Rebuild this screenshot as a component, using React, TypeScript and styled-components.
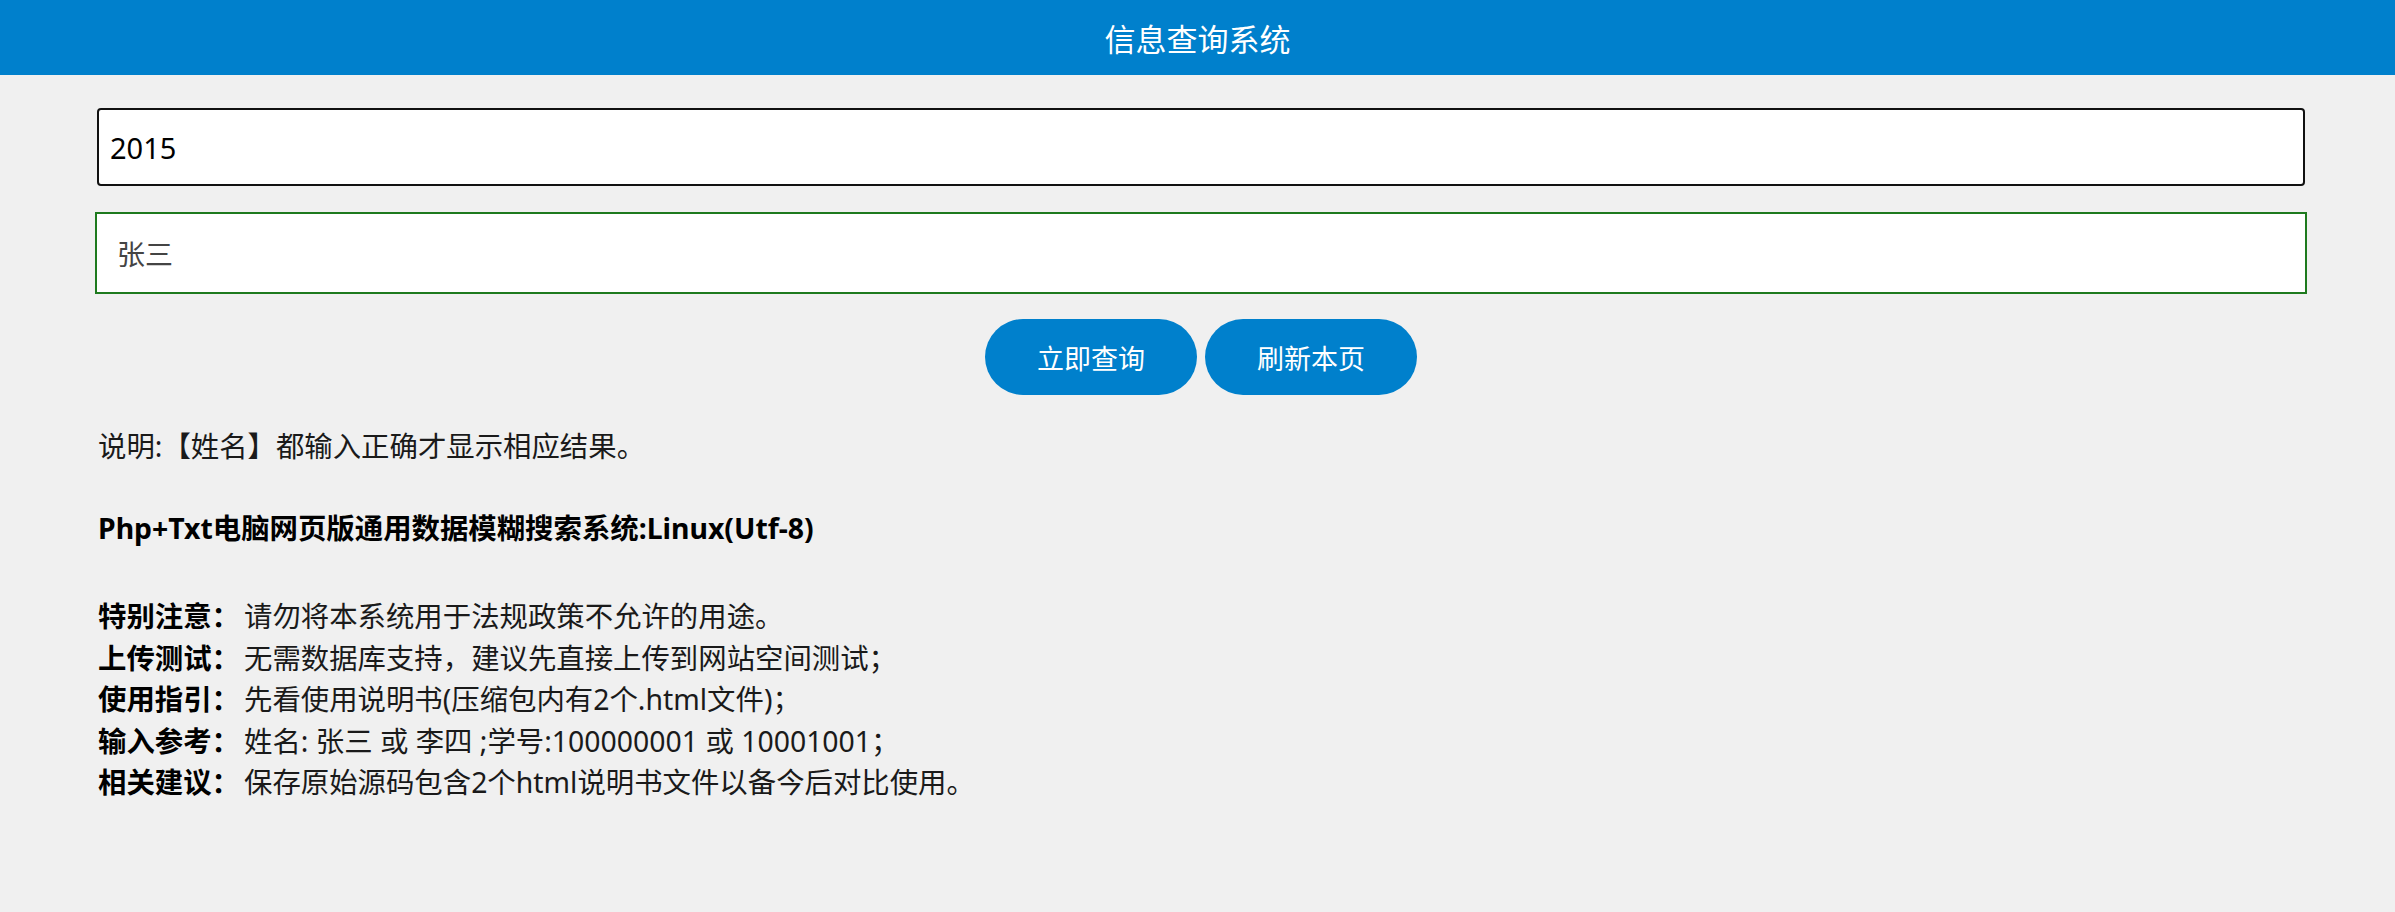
import React from "react";
import styled, { createGlobalStyle } from "styled-components";

const Global = createGlobalStyle`
  html, body { margin: 0; padding: 0; background: #f0f0f0; }
  body { font-family: "Noto Sans", "Noto Sans CJK SC", sans-serif; color: #1a1a1a; }
  * { box-sizing: border-box; }
`;

const Header = styled.header`
  height: 75px;
  background: #0080cc;
  color: #fff;
  display: flex;
  align-items: center;
  justify-content: center;
  font-size: 31px;
  font-family: "Noto Sans CJK SC", sans-serif;
`;

const Main = styled.main`
  padding: 33px 88px 0 95px;
  display: flex;
  flex-direction: column;
`;

const Field = styled.input<{ $variant: "focus" | "ok" }>`
  display: block;
  width: ${(p) => (p.$variant === "focus" ? "calc(100% - 4px)" : "100%")};
  margin: ${(p) => (p.$variant === "focus" ? "0 2px" : "0")};
  height: ${(p) => (p.$variant === "focus" ? "78px" : "82px")};
  border: 2px solid ${(p) => (p.$variant === "focus" ? "#111" : "#1e7a1e")};
  border-radius: ${(p) => (p.$variant === "focus" ? "4px" : "0")};
  background: #fff;
  padding: ${(p) => (p.$variant === "focus" ? "0 11px" : "0 20px")};
  font-family: "Noto Sans", "Noto Sans CJK SC", sans-serif;
  font-size: ${(p) => (p.$variant === "focus" ? "29px" : "28px")};
  color: ${(p) => (p.$variant === "focus" ? "#000" : "#444")};
  outline: none;
`;

const Gap = styled.div<{ $h: number }>`
  height: ${(p) => p.$h}px;
`;

const Buttons = styled.div`
  display: flex;
  justify-content: center;
  gap: 8px;
`;

const PillButton = styled.button`
  width: 212px;
  height: 76px;
  border: none;
  border-radius: 38px;
  background: #0080cc;
  color: #fff;
  font-family: "Noto Sans CJK SC", sans-serif;
  font-size: 27px;
  padding: 0;
  cursor: pointer;
`;

const Notes = styled.section`
  padding-left: 3px;
  font-size: 28.4px;
  line-height: 41px;
  font-family: "Noto Sans", "Noto Sans CJK SC", sans-serif;
  color: #1a1a1a;
`;

const Para = styled.p<{ $bold?: boolean }>`
  margin: 0 0 ${(p) => (p.$bold ? "47px" : "41px")} 0;
  font-weight: ${(p) => (p.$bold ? 700 : 400)};
  color: ${(p) => (p.$bold ? "#000" : "#1a1a1a")};
`;

const List = styled.div`
  display: flex;
  flex-direction: column;
  line-height: 41.5px;
`;

const Row = styled.div`
  display: flex;
`;

const Label = styled.span`
  font-weight: 700;
  color: #000;
  width: 146px;
  flex: none;
`;

const Value = styled.span``;

const rows: [string, string][] = [
  ["特别注意：", "请勿将本系统用于法规政策不允许的用途。"],
  ["上传测试：", "无需数据库支持，建议先直接上传到网站空间测试；"],
  ["使用指引：", "先看使用说明书(压缩包内有2个.html文件)；"],
  ["输入参考：", "姓名: 张三 或 李四 ;学号:100000001 或 10001001；"],
  ["相关建议：", "保存原始源码包含2个html说明书文件以备今后对比使用。"],
];

export default function App() {
  return (
    <>
      <Global />
      <Header>信息查询系统</Header>
      <Main>
        <Field $variant="focus" defaultValue="2015" />
        <Gap $h={26} />
        <Field $variant="ok" defaultValue="张三" />
        <Gap $h={25} />
        <Buttons>
          <PillButton>立即查询</PillButton>
          <PillButton>刷新本页</PillButton>
        </Buttons>
        <Gap $h={31} />
        <Notes>
          <Para>说明:【姓名】都输入正确才显示相应结果。</Para>
          <Para $bold>Php+Txt电脑网页版通用数据模糊搜索系统:Linux(Utf-8)</Para>
          <List>
            {rows.map(([l, v]) => (
              <Row key={l}>
                <Label>{l}</Label>
                <Value>{v}</Value>
              </Row>
            ))}
          </List>
        </Notes>
      </Main>
    </>
  );
}
